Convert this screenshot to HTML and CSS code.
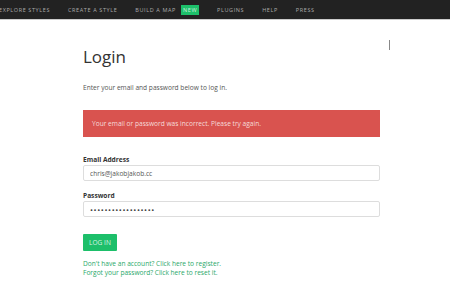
FILE: index.html
```html
<!DOCTYPE html>
<html lang="en">
<head>
    <meta charset="UTF-8">
    <meta name="viewport" content="width=device-width, initial-scale=1.0">
    <title>Login</title>
    <link rel="stylesheet" href="styles.css">
</head>
<body>
    <!-- Top navigation -->
    <nav class="top-nav">
        <a href="#">Explore Styles</a>
        <a href="#">Create a Style</a>
        <a href="#">Build a Map <span class="badge">New</span></a>
        <a href="#">Plugins</a>
        <a href="#">Help</a>
        <a href="#">Press</a>
    </nav>

    <div class="page">
        <div class="login-box">
            <h1>Login</h1>
            <p class="intro">Enter your email and password below to log in.</p>

            <div class="alert">Your email or password was incorrect. Please try again.</div>

            <form>
                <label for="email">Email Address</label>
                <input type="email" id="email" value="chris@jakobjakob.cc">

                <label for="password" class="pw-label">Password</label>
                <input type="password" id="password" class="pw-input" value="dddddddddddddddddd">

                <button type="submit" class="login-btn">Log In</button>
            </form>

            <div class="links">
                <a href="#">Don't have an account? Click here to register.</a>
                <a href="#">Forgot your password? Click here to reset it.</a>
            </div>
        </div>
        <div class="side-mark"></div>
    </div>
</body>
</html>
```

FILE: styles.css
```css
body {
    margin: 0;
    padding: 0;
    font-family: "Open Sans", Arial, sans-serif;
    background-color: #fff;
    color: #444;
}

.top-nav {
    display: flex;
    align-items: center;
    gap: 18px;
    height: 19px;
    margin-left: -1px;
    background-color: #222;
    border-bottom: 1px solid #ccc;
    overflow: hidden;
}

.top-nav a {
    color: #aaa;
    font-size: 5.5px;
    letter-spacing: 0.6px;
    text-transform: uppercase;
    text-decoration: none;
    white-space: nowrap;
}

.top-nav .badge {
    display: inline-block;
    margin-left: 3px;
    padding: 1px 2px;
    background-color: #1dbf6a;
    color: #cfeedd;
}

.page {
    display: flex;
    padding-left: 83px;
}

.login-box {
    width: 297px;
}

.login-box h1 {
    margin: 24px 0 0;
    font-size: 17px;
    font-weight: 400;
    color: #333;
    line-height: 26px;
}

.intro {
    margin: 13px 0 0;
    font-size: 6.6px;
    color: #555;
}

.alert {
    margin-top: 18px;
    height: 27px;
    padding-left: 9px;
    display: flex;
    align-items: center;
    background-color: #d9534f;
    color: #f6dcda;
    font-size: 6.6px;
}

form label {
    display: block;
    margin-top: 18px;
    font-size: 6.6px;
    font-weight: bold;
    color: #333;
}

form .pw-label {
    margin-top: 10px;
}

form input {
    display: block;
    box-sizing: border-box;
    width: 100%;
    height: 16px;
    margin-top: 1px;
    padding: 0 6px;
    border: 1px solid #ddd;
    border-radius: 2px;
    font-family: "Open Sans", Arial, sans-serif;
    font-size: 6.6px;
    color: #555;
}

form .pw-input {
    font-size: 8px;
    letter-spacing: 0.6px;
    color: #444;
}

.login-btn {
    display: block;
    margin-top: 17px;
    width: 34px;
    height: 17px;
    padding: 0;
    border: none;
    border-radius: 1px;
    background-color: #1dbf6a;
    color: #d5f3e2;
    font-family: "Open Sans", Arial, sans-serif;
    font-size: 6.6px;
    text-transform: uppercase;
}

.links {
    margin-top: 8px;
}

.links a {
    display: block;
    font-size: 6.6px;
    line-height: 9px;
    color: #2aa86a;
    text-decoration: none;
}

.side-mark {
    width: 1px;
    height: 10px;
    margin: 20px 0 0 9px;
    background-color: #888;
}
```
